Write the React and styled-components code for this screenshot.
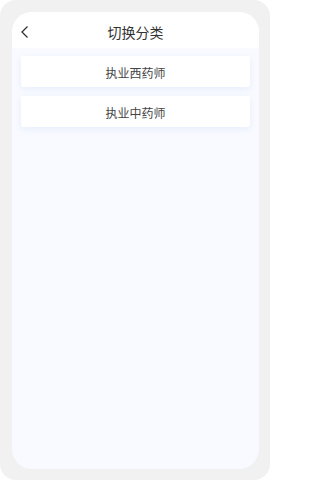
import React from "react";
import styled, { createGlobalStyle } from "styled-components";

const Global = createGlobalStyle`
  html, body { margin: 0; padding: 0; background: #ffffff; }
  body { font-family: "Noto Sans CJK SC", "Noto Sans", sans-serif; }
  * { box-sizing: border-box; }
`;

const Frame = styled.div`
  width: 270px;
  height: 480px;
  background: #f1f1f1;
  border-radius: 16px;
  padding: 12px 11px 11px 12px;
  display: flex;
`;

const Screen = styled.div`
  flex: 1;
  border-radius: 20px;
  overflow: hidden;
  background: #f8faff;
  display: flex;
  flex-direction: column;
`;

const Header = styled.div`
  height: 36px;
  background: #ffffff;
  display: flex;
  align-items: center;
  justify-content: center;
  position: relative;
  flex-shrink: 0;
`;

const Back = styled.button`
  position: absolute;
  left: 5px;
  top: 12px;
  width: 16px;
  height: 16px;
  padding: 0;
  border: none;
  background: transparent;
  display: flex;
  align-items: center;
  justify-content: center;
`;

const Title = styled.div`
  font-size: 14px;
  color: #333333;
  line-height: 1;
  margin-top: 4px;
`;

const List = styled.div`
  display: flex;
  flex-direction: column;
  gap: 9px;
  padding: 8px 9px 0 9px;
`;

const Card = styled.div`
  height: 31px;
  background: #ffffff;
  border-radius: 2px;
  box-shadow: 0 2px 6px rgba(200, 215, 240, 0.35);
  display: flex;
  align-items: center;
  justify-content: center;
  font-size: 12px;
  color: #444444;
  padding-top: 1px;
`;

export default function App() {
  const items = ["执业西药师", "执业中药师"];
  return (
    <>
      <Global />
      <Frame>
        <Screen>
          <Header>
            <Back aria-label="back">
              <svg width="10" height="14" viewBox="0 0 10 14">
                <path d="M7.5 1.5 L2 7 L7.5 12.5" fill="none" stroke="#333" strokeWidth="1.3" />
              </svg>
            </Back>
            <Title>切换分类</Title>
          </Header>
          <List>
            {items.map((t) => (
              <Card key={t}>{t}</Card>
            ))}
          </List>
        </Screen>
      </Frame>
    </>
  );
}
